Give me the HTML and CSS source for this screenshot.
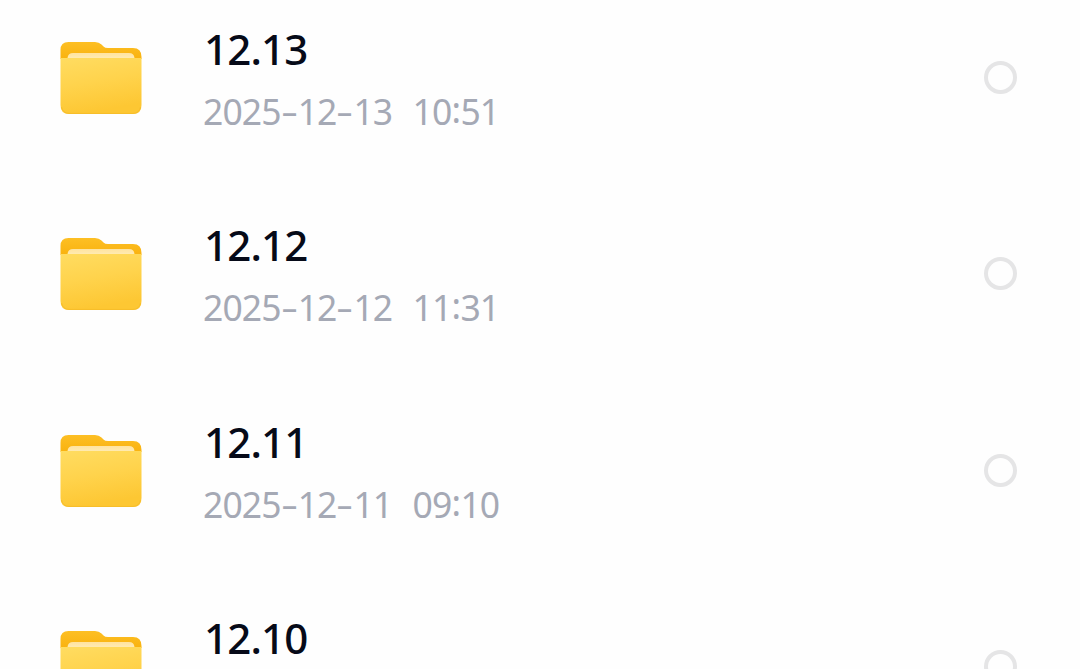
FILE: index.html
```html
<!DOCTYPE html>
<html lang="en">

<head>
	<meta charset="utf-8">
	<title>Folders</title>
	<link rel="stylesheet" href="styles.css">
</head>

<body>
	<svg class="defs" width="0" height="0">
		<defs>
			<linearGradient id="front" x1="0" y1="0" x2="0.25" y2="1">
				<stop offset="0" stop-color="#ffdc61" />
				<stop offset="0.5" stop-color="#ffd34c" />
				<stop offset="1" stop-color="#fdc733" />
			</linearGradient>
			<linearGradient id="paper" x1="0" y1="0" x2="0" y2="1">
				<stop offset="0" stop-color="#ffe3a0" />
				<stop offset="0.6" stop-color="#ffeab0" />
				<stop offset="1" stop-color="#ffdd70" />
			</linearGradient>
			<linearGradient id="back" x1="0" y1="0" x2="0" y2="1">
				<stop offset="0" stop-color="#fdbf24" />
				<stop offset="1" stop-color="#f9b20f" />
			</linearGradient>
			<symbol id="folder" viewBox="0 0 82 74">
				<path d="M0.5 18V9Q0.5 1 8.5 1H35Q39 1 41.5 3.500L43.500 5.500Q45 7 48 7H73Q81.500 7 81.500 16V18H0.500Z" fill="url(#back)" />
				<path d="M7.500 20V17Q8 12 13 12H69Q74 12 74.500 17V20Z" fill="url(#paper)" />
				<path d="M0.500 17H81.500V64Q81.500 73 73 73H9Q0.500 73 0.500 64Z" fill="url(#front)" />
				<path d="M1.500 66Q3 72.400 9 72.400H73Q79 72.400 80.500 66" fill="none" stroke="#f7bd2a" />
			</symbol>
		</defs>
	</svg>
	<ul class="list">
		<li class="item">
			<svg class="folder"><use href="#folder" /></svg>
			<div class="info">
				<h3 class="name">12.13</h3>
				<p class="date">2025<span class="dash">-</span>12<span class="dash">-</span>13 <span class="time">10<span class="colon">:</span>51</span></p>
			</div>
			<span class="check"></span>
		</li>
		<li class="item">
			<svg class="folder"><use href="#folder" /></svg>
			<div class="info">
				<h3 class="name">12.12</h3>
				<p class="date">2025<span class="dash">-</span>12<span class="dash">-</span>12 <span class="time">11<span class="colon">:</span>31</span></p>
			</div>
			<span class="check"></span>
		</li>
		<li class="item">
			<svg class="folder"><use href="#folder" /></svg>
			<div class="info">
				<h3 class="name">12.11</h3>
				<p class="date">2025<span class="dash">-</span>12<span class="dash">-</span>11 <span class="time">09<span class="colon">:</span>10</span></p>
			</div>
			<span class="check"></span>
		</li>
		<li class="item">
			<svg class="folder"><use href="#folder" /></svg>
			<div class="info">
				<h3 class="name">12.10</h3>
			</div>
			<span class="check"></span>
		</li>
	</ul>
</body>

</html>
```
FILE: styles.css
```css
* {
	margin: 0;
	padding: 0;
	box-sizing: border-box;
}

body {
	background: #fefefe;
	font-family: "Noto Sans", sans-serif;
}

.defs {
	display: block;
}

.list {
	height: 669px;
	overflow: hidden;
	list-style: none;
}

.item {
	display: flex;
	align-items: flex-start;
	height: 196.3px;
	padding: 0 63px 0 60px;
}

/* the last row is cut by the bottom of the screen */
.item:last-child {
	height: 80px;
	overflow: hidden;
}

.folder {
	width: 82px;
	height: 74px;
	margin-top: 41px;
	flex-shrink: 0;
}

.info {
	flex: 1;
	padding: 19px 0 0 62px;
}

.name {
	height: 62px;
	line-height: 60px;
	font-size: 42px;
	font-weight: 500;
	letter-spacing: -0.8px;
	color: #060a18;
}

.date {
	line-height: 60px;
	margin-left: -1px;
	font-size: 35.5px;
	letter-spacing: -0.9px;
	color: #a5a9b5;
	white-space: nowrap;
}

.dash {
	display: inline-block;
	width: 17px;
	letter-spacing: 0;
	text-align: center;
	transform: scale(1.5, 0.95);
}

.time {
	margin-left: 12px;
}

.colon {
	display: inline-block;
	width: 9px;
	letter-spacing: 0;
	transform: translateY(-2px);
}

.check {
	width: 33px;
	height: 33px;
	margin-top: 61px;
	border: 4px solid #e5e5e6;
	border-radius: 50%;
}
```
